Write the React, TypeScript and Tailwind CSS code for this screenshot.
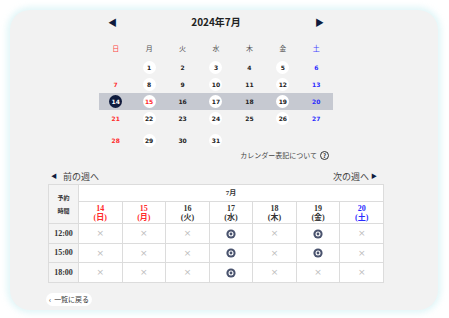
import React from 'react';

const weeks: (number | null)[][] = [
    [null, 1, 2, 3, 4, 5, 6],
    [7, 8, 9, 10, 11, 12, 13],
    [14, 15, 16, 17, 18, 19, 20],
    [21, 22, 23, 24, 25, 26, 27],
    [28, 29, 30, 31, null, null, null],
];

const open = new Set([1, 3, 5, 8, 10, 12, 15, 17, 19, 22, 24, 26, 29, 31]);
const holidays = new Set([15]);
const weekdays = ['日', '月', '火', '水', '木', '金', '土'];

const days = [
    { d: 14, w: '日', c: 'text-[#ff2a2a]' },
    { d: 15, w: '月', c: 'text-[#ff2a2a]' },
    { d: 16, w: '火', c: 'text-[#333]' },
    { d: 17, w: '水', c: 'text-[#333]' },
    { d: 18, w: '木', c: 'text-[#333]' },
    { d: 19, w: '金', c: 'text-[#333]' },
    { d: 20, w: '土', c: 'text-[#2a2aff]' },
];

const slots = [
    { t: '12:00', v: [0, 0, 0, 1, 0, 1, 0] },
    { t: '15:00', v: [0, 0, 0, 1, 0, 1, 0] },
    { t: '18:00', v: [0, 0, 0, 1, 0, 0, 0] },
];

function Double() {
    return (
        <svg width="10" height="10" viewBox="0 0 10 10" className="mx-auto block">
            <circle cx="5" cy="5" r="4.6" fill="#4a536e" />
            <circle cx="5" cy="5" r="2.5" fill="#fff" />
            <circle cx="5" cy="5" r="1.4" fill="#4a536e" />
        </svg>
    );
}

function dateColor(col: number, d: number) {
    if (col === 0 || holidays.has(d)) return 'text-[#ff2a2a]';
    if (col === 6) return 'text-[#2a2aff]';
    return 'text-[#222]';
}

export default function App() {
    return (
        <div className="p-[10px] bg-white font-['Noto_Sans_CJK_JP',sans-serif]">
            <div className="w-[428px] h-[300px] rounded-[20px] bg-[#f2f2f2] shadow-[0_0_6px_3px_rgba(205,240,244,0.6)] pt-[5px]">
                <div className="ml-[89px] w-[234px]">
                    <div className="flex items-center justify-between h-[14px] px-[9px]">
                        <span className="text-[#0f1b3d] text-[9px] leading-none">◀</span>
                        <span className="text-[10px] font-bold text-[#222] leading-none">2024年7月</span>
                        <span className="text-[#0f1b3d] text-[9px] leading-none">▶</span>
                    </div>
                    <div className="grid grid-cols-7 mt-[12px] h-[14px] items-center text-[7px] leading-none">
                        {weekdays.map((w, i) => (
                            <span
                                key={w}
                                className={`text-center ${i === 0 ? 'text-[#ff4444]' : i === 6 ? 'text-[#4444ff]' : 'text-[#555]'}`}
                            >
                                {w}
                            </span>
                        ))}
                    </div>
                    <div className="mt-[4px]">
                        {weeks.map((row, ri) => (
                            <div
                                key={ri}
                                className={`grid grid-cols-7 h-[17px] items-center ${ri === 2 ? 'bg-[#c6c9d1]' : ''} ${ri === 4 ? 'mt-[5px]' : ''}`}
                            >
                                {row.map((d, ci) => (
                                    <div key={ci} className="flex justify-center">
                                        {d !== null && (
                                            <span
                                                className={`flex items-center justify-center w-[13px] h-[13px] rounded-full font-['DejaVu_Sans',sans-serif] font-bold text-[6px] leading-none ${
                                                    d === 14
                                                        ? 'bg-[#0f1b3d] text-white'
                                                        : `${open.has(d) ? 'bg-white' : ''} ${dateColor(ci, d)}`
                                                }`}
                                            >
                                                {d}
                                            </span>
                                        )}
                                    </div>
                                ))}
                            </div>
                        ))}
                    </div>
                    <div className="flex items-center justify-end gap-[3px] pr-[4px] mt-[1px] h-[11px] text-[7px] text-[#444] leading-none">
                        <span>カレンダー表記について</span>
                        <span className="flex items-center justify-center w-[9px] h-[9px] rounded-full border border-[#333] text-[6px] font-bold text-[#333]">
                            ?
                        </span>
                    </div>
                </div>

                <div className="ml-[38px] w-[336px] mt-[9px]">
                    <div className="flex items-center justify-between h-[12px] pl-[3px] pr-[7px] text-[9px] text-[#444] leading-none">
                        <span className="flex items-center gap-[6px]">
                            <span className="text-[#0f1b3d] text-[6px]">◀</span>
                            前の週へ
                        </span>
                        <span className="flex items-center gap-[2px]">
                            次の週へ
                            <span className="text-[#0f1b3d] text-[6px]">▶</span>
                        </span>
                    </div>
                    <table className="mt-[2px] w-[336px] border-collapse table-fixed bg-white text-[#333] font-['Liberation_Serif','Noto_Sans_CJK_JP',serif]">
                        <colgroup>
                            <col className="w-[30px]" />
                            {days.map((d) => (
                                <col key={d.d} />
                            ))}
                        </colgroup>
                        <thead>
                            <tr className="h-[17px]">
                                <th
                                    rowSpan={2}
                                    className="border border-[#dcdcdc] bg-[#f4f4f4] text-[6px] font-bold leading-[13px] font-['Noto_Sans_CJK_JP',sans-serif]"
                                >
                                    予約
                                    <br />
                                    時間
                                </th>
                                <th colSpan={7} className="border border-[#dcdcdc] text-[7px] font-bold">
                                    7月
                                </th>
                            </tr>
                            <tr className="h-[22px]">
                                {days.map((d) => (
                                    <th key={d.d} className={`border border-[#dcdcdc] text-[8px] font-bold leading-[9px] ${d.c}`}>
                                        {d.d}
                                        <br />({d.w})
                                    </th>
                                ))}
                            </tr>
                        </thead>
                        <tbody>
                            {slots.map((s, i) => (
                                <tr key={s.t} className={i === 1 ? 'h-[19px]' : 'h-[20px]'}>
                                    <td className="border border-[#dcdcdc] bg-[#f4f4f4] text-center text-[8px] font-bold">{s.t}</td>
                                    {s.v.map((v, j) => (
                                        <td
                                            key={j}
                                            className="border border-[#dcdcdc] text-center text-[9px] text-[#bdbdbd] leading-none font-['DejaVu_Sans',sans-serif]"
                                        >
                                            {v ? <Double /> : '×'}
                                        </td>
                                    ))}
                                </tr>
                            ))}
                        </tbody>
                    </table>
                </div>

                <button className="ml-[36px] mt-[10px] flex items-center gap-[3px] h-[13px] px-[3px] rounded-full bg-white text-[7px] text-[#333] leading-none">
                    <span className="text-[7px]">‹</span>
                    一覧に戻る
                </button>
            </div>
        </div>
    );
}
